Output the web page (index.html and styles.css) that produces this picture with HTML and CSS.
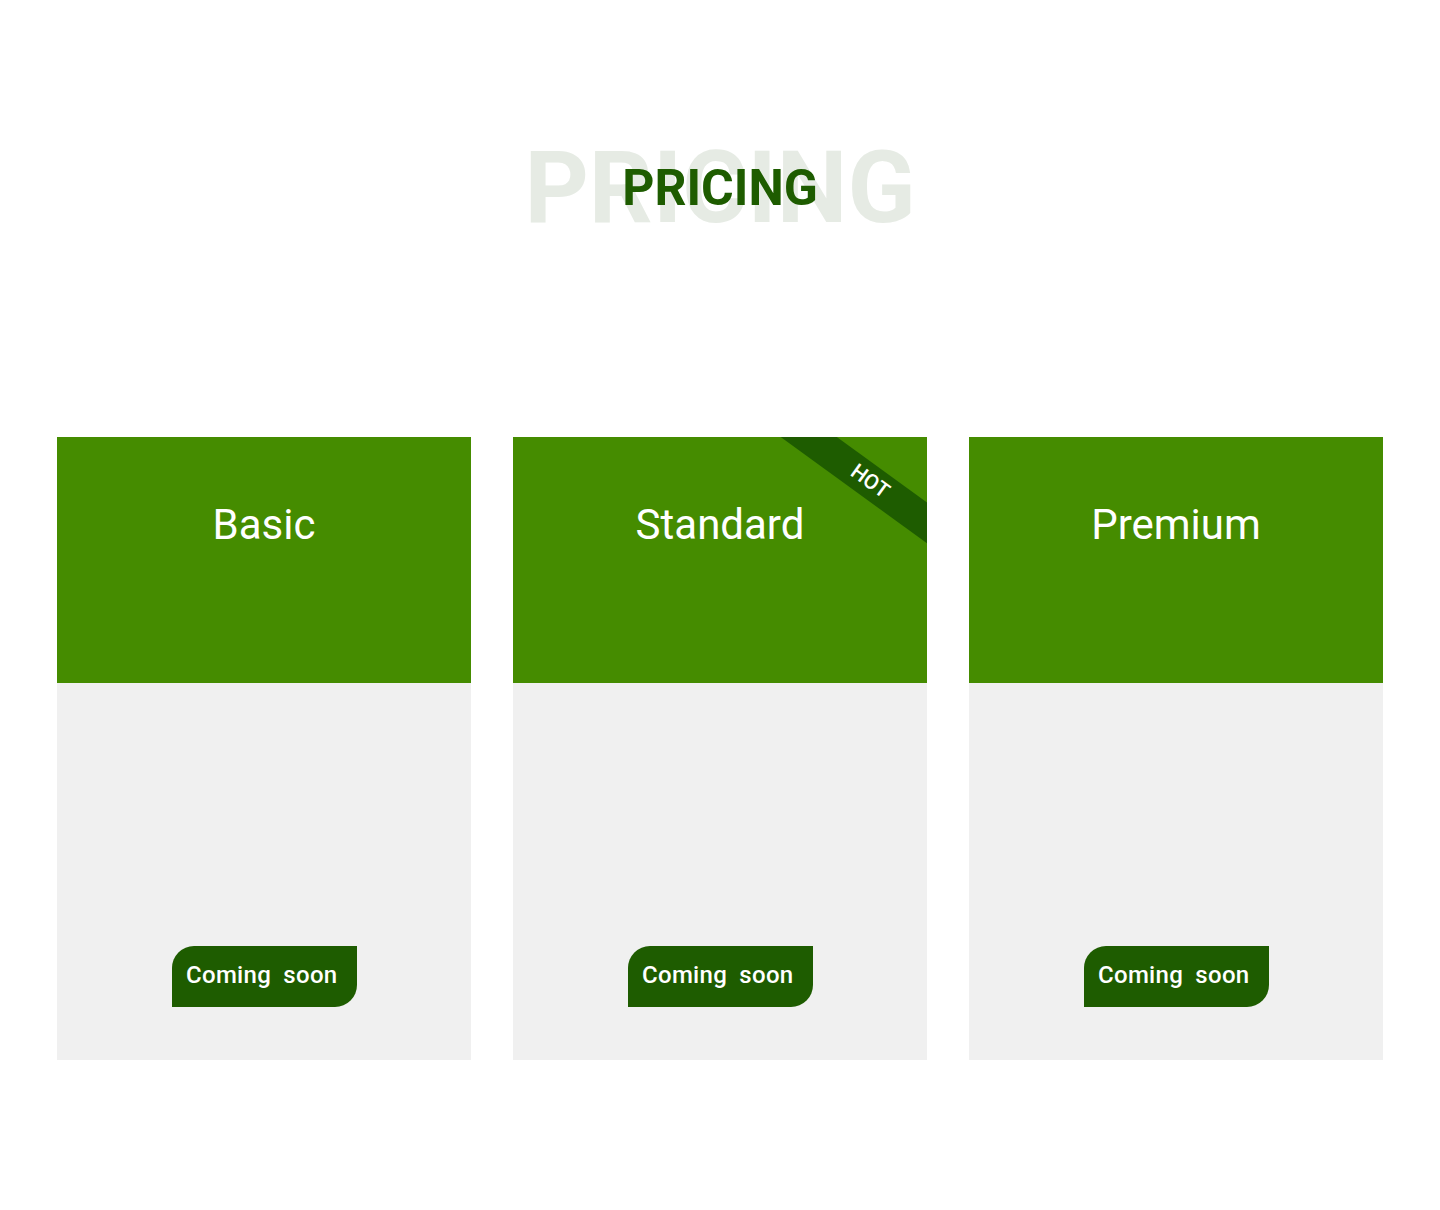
FILE: index.html
```html
<!DOCTYPE html>
<html lang="en">
<head>
<meta charset="utf-8">
<title>Pricing</title>
<link rel="stylesheet" href="styles.css">
</head>
<body>
<section class="pricing">
  <div class="heading">
    <span class="heading-bg">PRICING</span>
    <h1 class="heading-fg">PRICING</h1>
  </div>
  <div class="cards">
    <div class="card">
      <div class="card-head"><h2 class="card-title">Basic</h2></div>
      <div class="card-body"><a class="btn">Coming soon</a></div>
    </div>
    <div class="card">
      <div class="card-head">
        <h2 class="card-title">Standard</h2>
        <div class="ribbon">HOT</div>
      </div>
      <div class="card-body"><a class="btn">Coming soon</a></div>
    </div>
    <div class="card">
      <div class="card-head"><h2 class="card-title">Premium</h2></div>
      <div class="card-body"><a class="btn">Coming soon</a></div>
    </div>
  </div>
</section>
</body>
</html>
```
FILE: styles.css
```css
* { box-sizing: border-box; }
html, body { margin: 0; padding: 0; background: #fff; }
body { font-family: Roboto, "Liberation Sans", sans-serif; }

.pricing { padding-top: 138px; }

.heading {
  display: grid;
  place-items: center;
  height: 100px;
}
.heading-bg, .heading-fg {
  grid-area: 1 / 1;
  line-height: 1;
  font-weight: 700;
}
.heading-bg {
  font-size: 100px;
  color: #e6ebe4;
}
.heading-fg {
  margin: 0;
  font-size: 50px;
  color: #1e5c00;
  position: relative;
}

.cards {
  margin: 199px auto 0;
  width: 1326px;
  display: grid;
  grid-template-columns: repeat(3, 1fr);
  gap: 42px;
}
.card { display: flex; flex-direction: column; }
.card-head {
  position: relative;
  overflow: hidden;
  height: 246px;
  background: #458c00;
  padding-top: 64px;
  text-align: center;
}
.card-title {
  margin: 0;
  font-size: 42px;
  line-height: 48px;
  font-weight: 400;
  color: #fff;
}
.ribbon {
  position: absolute;
  left: 257px;
  top: 28px;
  width: 200px;
  height: 33px;
  line-height: 33px;
  background: #1e5c00;
  color: #fff;
  font-size: 21px;
  font-weight: 500;
  text-align: center;
  transform: rotate(36deg);
}
.card-body {
  height: 377px;
  background: #f0f0f0;
  display: flex;
  flex-direction: column;
  justify-content: flex-end;
  align-items: center;
  padding-bottom: 53px;
}
.btn {
  width: 185px;
  height: 61px;
  display: flex;
  align-items: center;
  padding-left: 14px;
  padding-bottom: 4px;
  background: #1e5c00;
  color: #fff;
  font-size: 24px;
  font-weight: 500;
  letter-spacing: 0.3px;
  word-spacing: 6px;
  border-radius: 22px 0 22px 0;
  margin-left: 1px;
}
```
